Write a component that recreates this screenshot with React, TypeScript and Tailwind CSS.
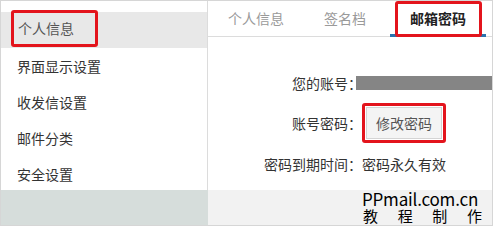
import React from 'react'

const font = { fontFamily: '"Noto Sans", "Noto Sans CJK SC", sans-serif' }
const markFont = { fontFamily: '"Noto Sans CJK SC", sans-serif' }

const menu = ['个人信息', '界面显示设置', '收发信设置', '邮件分类', '安全设置']

export default function App() {
  return (
    <div className="w-[493px] h-[226px] overflow-hidden border border-[#d6d6d6] bg-white flex flex-col" style={font}>
      <div className="flex h-[189px] shrink-0">
        {/* sidebar */}
        <div className="w-[207px] shrink-0 border-r border-[#dcdcdc] pt-[11px]">
          {menu.map((m, i) => (
            <div
              key={m}
              className={
                i === 0
                  ? 'h-[36px] flex items-center pl-[10px] bg-[#e8e8e8]'
                  : 'h-[36px] flex items-center pl-[16px] text-[14px] text-[#333]'
              }
            >
              {i === 0 ? (
                <span className="h-[37px] w-[87px] -mt-[3px] flex items-center pl-[4px] border-[3px] border-[#e3141c] rounded-[3px] text-[14px] text-[#555]">
                  {m}
                </span>
              ) : (
                m
              )}
            </div>
          ))}
        </div>

        {/* main */}
        <div className="flex-1 flex flex-col">
          <div className="h-[36px] flex border-b border-[#dcdcdc] text-[14px]">
            <div className="w-[96px] flex items-center justify-center text-[#9a9a9a]">个人信息</div>
            <div className="w-[82px] flex items-center justify-center text-[#9a9a9a]">签名档</div>
            <div className="ml-[4px] w-[96px] flex items-center justify-center border-b-[3px] border-[#2a72ad] -mb-px">
              <span className="w-[87px] h-[36px] mt-[2px] flex items-center justify-center border-[3px] border-[#e3141c] rounded-[3px] font-bold text-[#222]">
                邮箱密码
              </span>
            </div>
          </div>

          <div className="flex flex-col pt-[28px] text-[14px] text-[#333]">
            <div className="flex items-center h-[36px]">
              <div className="w-[154px] text-right">您的账号：</div>
              <div className="-ml-[6px] flex-1 h-[14px] bg-[#858585]" />
            </div>
            <div className="flex items-center h-[42px] mt-[1px]">
              <div className="w-[154px] text-right">账号密码：</div>
              <div className="border-[3px] border-[#e3141c] rounded-[3px] p-[1px]">
                <button className="h-[32px] w-[76px] bg-[#f4f4f4] border border-[#d4d4d4] text-[14px] text-[#555]">
                  修改密码
                </button>
              </div>
            </div>
            <div className="flex items-center h-[40px]">
              <div className="w-[154px] text-right">密码到期时间：</div>
              <div>密码永久有效</div>
            </div>
          </div>
        </div>
      </div>

      {/* bottom strip */}
      <div className="flex-1 flex overflow-hidden">
        <div className="w-[207px] bg-[#d6dddb]" />
        <div className="flex-1 bg-[#f2f2f2] flex justify-end pr-[9px]">
          <div className="flex flex-col w-[121px] text-black" style={markFont}>
            <div className="text-[17px] leading-[18px] whitespace-nowrap tracking-[-0.2px]">PPmail.com.cn</div>
            <div className="flex justify-between text-[15px] leading-[15px] px-[1px]">
              <span>教</span>
              <span>程</span>
              <span>制</span>
              <span>作</span>
            </div>
          </div>
        </div>
      </div>
    </div>
  )
}
